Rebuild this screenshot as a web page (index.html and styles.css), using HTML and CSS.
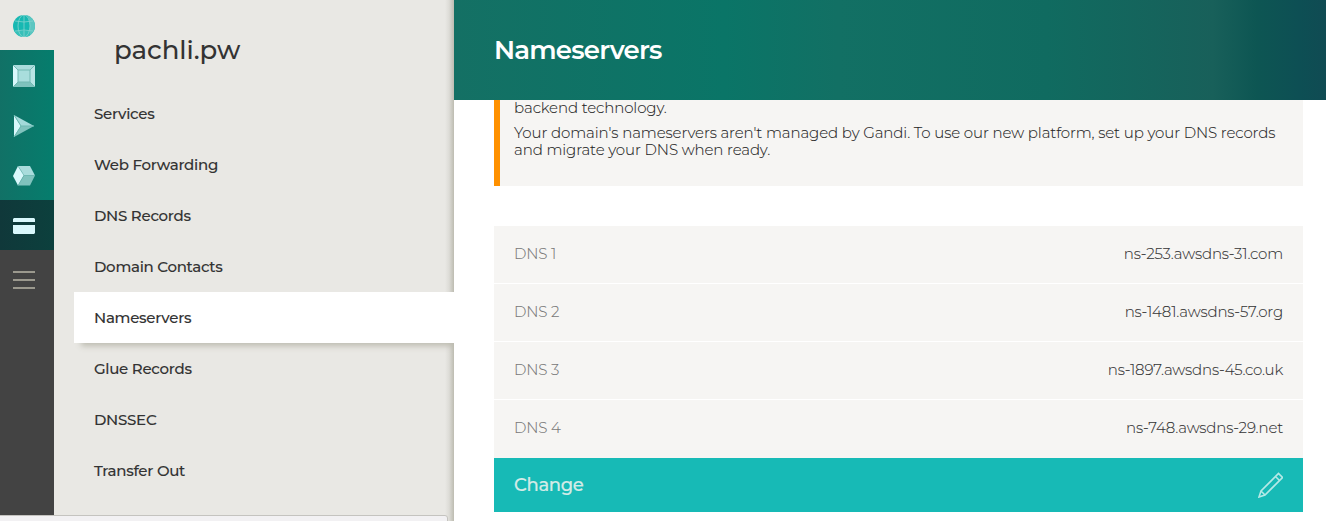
FILE: index.html
```html
<!DOCTYPE html>
<html lang="en">
<head>
<meta charset="utf-8">
<title>Nameservers</title>
<link rel="stylesheet" href="styles.css">
</head>
<body>
<div class="app">
  <nav class="rail">
    <a class="rail-item rail-light">
      <svg width="22" height="22" viewBox="0 0 22 22"><defs><clipPath id="globe"><circle cx="11" cy="11" r="11"/></clipPath></defs><g clip-path="url(#globe)"><path fill="#17b8b2" d="M0 0h22v22H0z"/><path fill="#5cc6c1" d="M14 0h8v22h-8l2-4 1-7-1-7z"/><path fill="#37c0b9" d="M0 16h17v6H0z"/></g><g fill="none" stroke="#84d3ce" stroke-width=".8"><path d="M11 0v22M2 6q9 2 18 0M2 16q9-2 18 0"/><ellipse cx="11" cy="11" rx="6" ry="11"/></g></svg>
    </a>
    <a class="rail-item rail-green">
      <svg width="22" height="22" viewBox="0 0 22 22"><path fill="#d9f8fc" d="M0 0h22L0 22z"/><path fill="#a9dcdc" d="M0 0h22l-5 5H5z"/><path fill="#7fc2bd" d="M22 0v22H0l5-5h12V5z"/><path fill="#b9e5e5" d="M22 0v22l-5-5V5z"/><path fill="#a9dedd" stroke="#72b9b3" d="M5 5h12v12H5z"/><path stroke="#72b9b3" d="M0 0l5 5M22 0l-5 5M0 22l5-5M22 22l-5-5"/></svg>
    </a>
    <a class="rail-item rail-green">
      <svg width="22" height="22" viewBox="0 0 22 22"><path fill="#d9f8fc" d="M1 0l7 11-7 11z"/><path fill="#a4dada" d="M1 0l20 11H8z"/><path fill="#81c3be" d="M8 11h13L1 22z"/><path fill="none" stroke="#6ebab3" d="M1 0l7 11-7 11M8 11h13"/></svg>
    </a>
    <a class="rail-item rail-green">
      <svg width="22" height="22" viewBox="0 0 22 22"><path fill="#d9f8fc" d="M5 1l6 9-6 10.500L0 11z"/><path fill="#a9dcdc" d="M5 1h12l5 9.500H11z"/><path fill="#80c2bd" d="M11 10.500h11L17 20.500H5z"/><path fill="none" stroke="#70b9b3" stroke-width=".7" d="M5 1l6 9.500-6 10M11 10.500h11"/></svg>
    </a>
    <a class="rail-item rail-current">
      <svg width="22" height="22" viewBox="0 0 22 22"><path fill="#d9f8fc" d="M1 3h20l1 1v3H0V4zM0 10h22v8l-1 1H1l-1-1z"/></svg>
    </a>
    <a class="rail-item rail-menu">
      <svg width="22" height="22" viewBox="0 0 22 22"><path fill="#9b998e" d="M0 2h22v2H0zM0 10h22v2H0zM0 18h22v2H0z"/></svg>
    </a>
  </nav>
  <aside class="sidebar">
    <h2 class="domain">pachli.pw</h2>
    <ul class="menu">
      <li class="menu-item">Services</li>
      <li class="menu-item">Web Forwarding</li>
      <li class="menu-item">DNS Records</li>
      <li class="menu-item">Domain Contacts</li>
      <li class="menu-item active">Nameservers</li>
      <li class="menu-item">Glue Records</li>
      <li class="menu-item">DNSSEC</li>
      <li class="menu-item">Transfer Out</li>
    </ul>
  </aside>
  <main class="main">
    <header class="header"><h1 class="title">Nameservers</h1></header>
    <div class="content">
      <section class="notice">
        <p class="notice-text">backend technology.</p>
        <p class="notice-text">Your domain's nameservers aren't managed by Gandi. To use our new platform, set up your DNS records<br>and migrate your DNS when ready.</p>
      </section>
      <dl class="servers">
        <div class="server"><dt>DNS 1</dt><dd>ns-253.awsdns-31.com</dd></div>
        <div class="server"><dt>DNS 2</dt><dd>ns-1481.awsdns-57.org</dd></div>
        <div class="server"><dt>DNS 3</dt><dd>ns-1897.awsdns-45.co.uk</dd></div>
        <div class="server"><dt>DNS 4</dt><dd>ns-748.awsdns-29.net</dd></div>
      </dl>
      <a class="change"><span>Change</span>
        <svg width="25" height="26" viewBox="0 0 25 26" fill="none" stroke="#b5e9e6" stroke-width="1.600"><path d="M1 25l2-6L20.500 1.500l4 4L7 23zM17.500 4.500l4 4M3 19l4 4"/></svg>
      </a>
    </div>
  </main>
  <div class="status"></div>
</div>
</body>
</html>
```
FILE: styles.css
```css
* { box-sizing: border-box; }
body { margin: 0; font-family: Montserrat, Inter, sans-serif; color: #333; background: #fff; }
h1, h2, p, ul, dl, dd { margin: 0; padding: 0; }
.app { position: relative; display: flex; height: 521px; overflow: hidden; }
.rail { width: 54px; background: #434343; flex: none; }
.rail-item { display: flex; align-items: center; height: 50px; padding: 2px 0 0 13px; }
.rail-light { background: #e9e8e4; }
.rail-green { background: linear-gradient(90deg, #117166, #057d6d); }
.rail-current { background: linear-gradient(90deg, #10383a, #0c403d); }
.rail-menu { height: 60px; padding-top: 0; }
.rail svg { display: block; }
.sidebar { width: 400px; flex: none; background: linear-gradient(90deg, #e9e8e4 391px, #dddcd7 395px, #bdbcb1 400px); }
.domain { height: 88px; padding: 33px 0 0 60px; font-size: 26px; line-height: 34px; font-weight: 500; letter-spacing: -0.05px; }
.menu { list-style: none; }
.menu-item { height: 51px; padding-left: 40px; font-size: 15px; line-height: 51px; font-weight: 500; letter-spacing: -0.27px; -webkit-text-stroke: 0.1px #333; }
.active { margin-left: 20px; padding-left: 20px; background: #fff; box-shadow: 5px 5px 6px -2px #bdbcb1; }
.main { flex: 1; position: relative; background: #fff; }
.header { height: 100px; padding: 33px 40px 0; background: linear-gradient(90deg, #147064 0, #0a7567 31%, #127064 44%, #106b60 68%, #18605a 87%, #0d5653 92%, #0d4f54 97%, #104b53 100%); }
.title { color: #fff; font-size: 26px; line-height: 34px; font-weight: 600; letter-spacing: -0.8px; }
.content { padding: 0 23px 0 40px; }
.notice { display: flex; flex-direction: column; gap: 8px; height: 86px; padding-left: 14px; border-left: 6px solid #ff9100; background: #f6f5f3; margin-bottom: 40px; }
.notice-text { font-size: 15px; line-height: 17px; font-weight: 300; letter-spacing: -0.105px; white-space: nowrap; color: #222; -webkit-text-stroke: 0.1px #333; }
.notice-text:first-child { height: 16px; line-height: 15px; }
.notice-text + .notice-text { flex: none; }
.server { display: flex; justify-content: space-between; height: 58px; padding: 0 20px; line-height: 56px; background: #f6f5f3; border-bottom: 1px solid #fff; font-size: 15px; font-weight: 300; letter-spacing: -0.16px; -webkit-text-stroke: 0.1px; }
.server:last-child { border-bottom: 0; }
.server dt { color: #777; }
.change { display: flex; align-items: center; justify-content: space-between; height: 54px; padding: 0 20px; background: #17bab6; color: #d3ebe7; font-size: 18px; font-weight: 500; letter-spacing: -0.35px; -webkit-text-stroke: 0.2px; }
.status { position: absolute; left: -1px; bottom: -1px; width: 449px; height: 7px; background: #f2f1f3; border: 1px solid #c4c3bf; border-radius: 0 3px 0 0; }
```
